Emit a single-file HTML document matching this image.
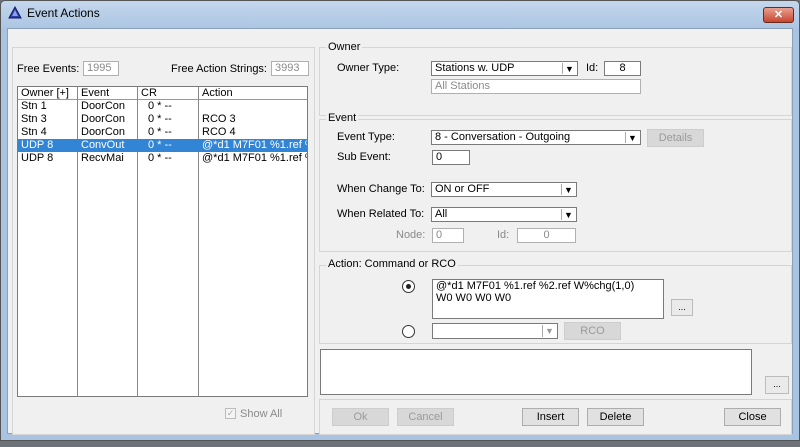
<!DOCTYPE html>
<html><head><style>
*{box-sizing:border-box;margin:0;padding:0}
body{width:800px;height:447px;overflow:hidden;background:#6d7378;font-family:"Liberation Sans",sans-serif;font-size:11px;color:#000;position:relative}
.a{position:absolute}
.win{left:0;top:0;width:800px;height:441px;background:linear-gradient(#c4d7ec,#a9c4e2 30px,#a9c4e2);border:1px solid #555;border-radius:5px 5px 0 0}
.client{left:7px;top:28px;width:786px;height:406px;background:#f0f0f0;border:1px solid #8ca0b8}
.grp{border:1px solid #d5d5d5;background:#f0f0f0}
.lbl{position:absolute;background:#f0f0f0;padding:0 2px}
.tb{position:absolute;background:#fff;border:1px solid #7a7a7a;padding:0 3px;line-height:13px}
.dis{color:#8a8a8a;border-color:#b0b0b0}
.btn{position:absolute;background:#e1e1e1;border:1px solid #adadad;text-align:center;line-height:16px}
.btn.d{background:#d8d8d8;color:#9a9a9a;border-color:#cdcdcd}
.arr{position:absolute;right:1px;top:1px;width:14px;bottom:1px;border-left:1px solid #aaa;font-size:9px;text-align:center;line-height:13px}
.row{position:absolute;left:0;width:289px;height:13px;line-height:13px}
.row span{position:absolute;left:3px}
</style></head><body>
<div class="a win"></div>
<svg class="a" style="left:8px;top:6px" width="14" height="13"><polygon points="7,1 13,12 1,12" fill="#2c3fa8" stroke="#101a60"/><polygon points="7,4 10,10 4,10" fill="#8ea0e8"/></svg>
<div class="a" style="left:27px;top:6px;font-size:12px">Event Actions</div>
<div class="a" style="left:763px;top:7px;width:31px;height:16px;background:linear-gradient(#e8a090,#c84530);border:1px solid #6a2a20;border-radius:3px;color:#fff;text-align:center;font-weight:bold;font-size:11px;line-height:14px">✕</div>
<div class="a client"></div>
<div class="a grp" style="left:12px;top:47px;width:303px;height:388px"></div>
<div class="a" style="left:17px;top:63px">Free Events:</div>
<div class="tb dis" style="left:83px;top:61px;width:36px;height:15px">1995</div>
<div class="a" style="left:171px;top:63px">Free Action Strings:</div>
<div class="tb dis" style="left:271px;top:61px;width:38px;height:15px">3993</div>
<div class="a" style="left:17px;top:86px;width:291px;height:311px;background:#fff;border:1px solid #7a7a7a">
 <div class="a" style="left:0;top:0;width:289px;height:13px;border-bottom:1px solid #999"></div>
 <div class="a" style="left:59px;top:0;width:1px;height:310px;background:#888"></div>
 <div class="a" style="left:119px;top:0;width:1px;height:310px;background:#888"></div>
 <div class="a" style="left:180px;top:0;width:1px;height:310px;background:#888"></div>
 <div class="row" style="top:0"><span>Owner [+]</span><span style="left:63px">Event</span><span style="left:123px">CR</span><span style="left:184px">Action</span></div>
 <div class="row" style="top:13px"><span>Stn 1</span><span style="left:63px">DoorCon</span><span style="left:130px">0 * --</span></div>
 <div class="row" style="top:26px"><span>Stn 3</span><span style="left:63px">DoorCon</span><span style="left:130px">0 * --</span><span style="left:184px">RCO 3</span></div>
 <div class="row" style="top:39px"><span>Stn 4</span><span style="left:63px">DoorCon</span><span style="left:130px">0 * --</span><span style="left:184px">RCO 4</span></div>
 <div class="row" style="top:52px;background:#3284d4;color:#fff;overflow:hidden"><span>UDP 8</span><span style="left:63px">ConvOut</span><span style="left:130px">0 * --</span><span style="left:184px;white-space:nowrap">@*d1 M7F01 %1.ref %</span></div>
 <div class="row" style="top:65px;overflow:hidden"><span>UDP 8</span><span style="left:63px">RecvMai</span><span style="left:130px">0 * --</span><span style="left:184px;white-space:nowrap">@*d1 M7F01 %1.ref %</span></div>
</div>
<div class="a" style="left:225px;top:408px;width:11px;height:11px;border:1px solid #bbb;background:#f4f4f4;color:#aaa;font-size:9px;line-height:9px;text-align:center">✓</div>
<div class="a" style="left:240px;top:408px;color:#8a8a8a">Show All</div>

<div class="a grp" style="left:319px;top:47px;width:473px;height:69px"></div>
<div class="lbl" style="left:326px;top:41px">Owner</div>
<div class="a" style="left:337px;top:62px">Owner Type:</div>
<div class="tb" style="left:431px;top:61px;width:147px;height:15px">Stations w. UDP<div class="arr">▼</div></div>
<div class="a" style="left:586px;top:62px">Id:</div>
<div class="tb" style="left:604px;top:61px;width:37px;height:15px;text-align:center">8</div>
<div class="tb dis" style="left:431px;top:79px;width:210px;height:15px">All Stations</div>

<div class="a grp" style="left:319px;top:119px;width:473px;height:133px"></div>
<div class="lbl" style="left:326px;top:112px">Event</div>
<div class="a" style="left:337px;top:131px">Event Type:</div>
<div class="tb" style="left:431px;top:130px;width:210px;height:15px">8 - Conversation - Outgoing<div class="arr">▼</div></div>
<div class="btn d" style="left:647px;top:129px;width:57px;height:18px">Details</div>
<div class="a" style="left:337px;top:151px">Sub Event:</div>
<div class="tb" style="left:432px;top:150px;width:38px;height:15px">0</div>
<div class="a" style="left:337px;top:183px">When Change To:</div>
<div class="tb" style="left:431px;top:182px;width:146px;height:15px">ON or OFF<div class="arr">▼</div></div>
<div class="a" style="left:337px;top:208px">When Related To:</div>
<div class="tb" style="left:431px;top:207px;width:146px;height:15px">All<div class="arr">▼</div></div>
<div class="a" style="left:396px;top:229px;color:#8a8a8a">Node:</div>
<div class="tb dis" style="left:432px;top:228px;width:32px;height:15px">0</div>
<div class="a" style="left:497px;top:229px;color:#8a8a8a">Id:</div>
<div class="tb dis" style="left:517px;top:228px;width:59px;height:15px;text-align:center">0</div>

<div class="a grp" style="left:319px;top:265px;width:473px;height:79px"></div>
<div class="lbl" style="left:326px;top:258px">Action: Command or RCO</div>
<div class="a" style="left:402px;top:280px;width:13px;height:13px;border:1px solid #333;border-radius:50%;background:#fff"><div class="a" style="left:3px;top:3px;width:5px;height:5px;border-radius:50%;background:#222"></div></div>
<div class="tb" style="left:432px;top:279px;width:232px;height:40px;line-height:12px;padding-right:16px">@*d1 M7F01 %1.ref %2.ref W%chg(1,0) W0 W0 W0 W0</div>
<div class="btn" style="left:671px;top:299px;width:22px;height:17px;background:#eaeaea;border-color:#bbb;font-size:9px;line-height:14px">...</div>
<div class="a" style="left:402px;top:325px;width:13px;height:13px;border:1px solid #333;border-radius:50%;background:#fff"></div>
<div class="tb" style="left:432px;top:323px;width:126px;height:16px"><div class="arr" style="color:#999">▼</div></div>
<div class="btn d" style="left:564px;top:322px;width:57px;height:18px">RCO</div>

<div class="tb" style="left:320px;top:349px;width:432px;height:46px"></div>
<div class="btn" style="left:765px;top:376px;width:24px;height:18px;background:#eaeaea;border-color:#bbb;font-size:9px;line-height:15px">...</div>

<div class="a grp" style="left:319px;top:399px;width:473px;height:36px"></div>
<div class="btn d" style="left:332px;top:408px;width:57px;height:18px">Ok</div>
<div class="btn d" style="left:397px;top:408px;width:57px;height:18px">Cancel</div>
<div class="btn" style="left:522px;top:408px;width:57px;height:18px">Insert</div>
<div class="btn" style="left:587px;top:408px;width:57px;height:18px">Delete</div>
<div class="btn" style="left:724px;top:408px;width:57px;height:18px">Close</div>
</body></html>
